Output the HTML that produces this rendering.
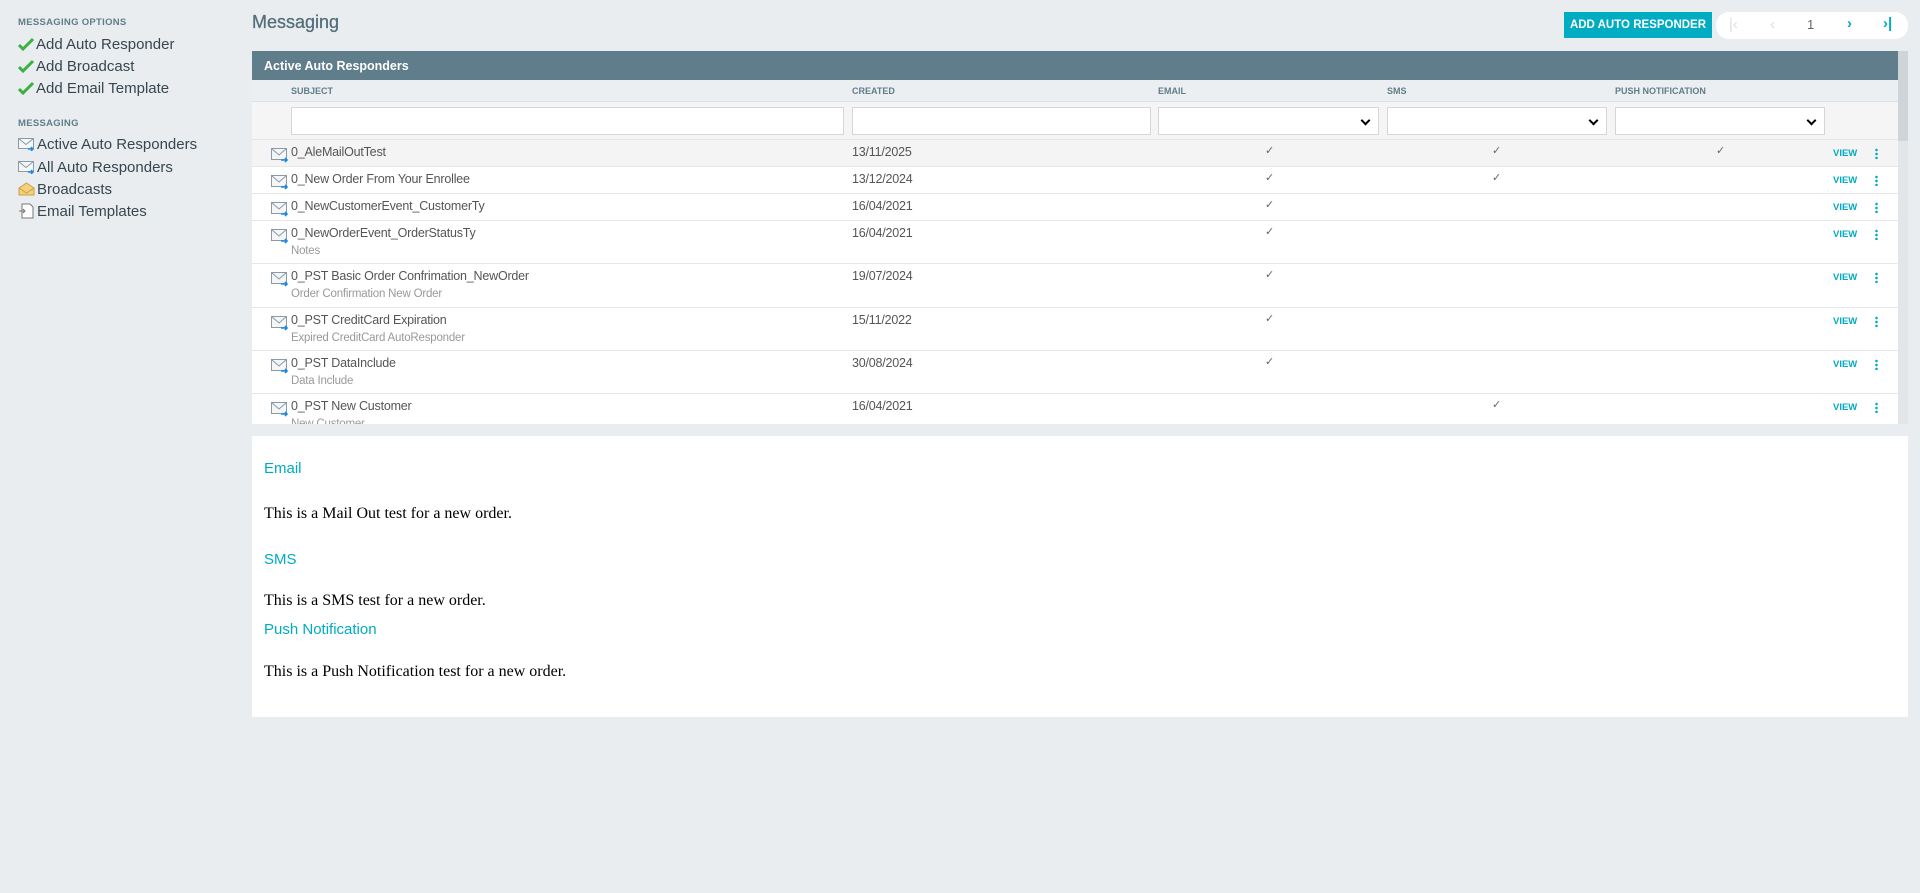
<!DOCTYPE html>
<html><head><meta charset="utf-8"><style>
*{box-sizing:border-box;margin:0;padding:0}
body{width:1920px;height:893px;background:#e9edf0;font-family:"Liberation Sans",sans-serif;position:relative;overflow:hidden;color:#555}
.a{position:absolute}
.sh{font-size:9.5px;font-weight:bold;color:#607d8b;letter-spacing:.3px}
.si{font-size:15px;color:#37474f;left:18px;display:flex;align-items:center;height:20px}
.si svg{margin-right:2px}
.col{font-size:9px;font-weight:bold;color:#607d8b;top:86px}
.inp{background:#fff;border:1px solid #d6d6d6;top:107px;height:28px}
.sel::after{content:"";position:absolute;right:9px;top:9px;width:5px;height:5px;border-right:2.5px solid #000;border-bottom:2.5px solid #000;transform:rotate(45deg)}
.row{position:absolute;left:0;width:1646px;border-bottom:1px solid #e6e6e6;background:#fff}
.t{position:absolute;font-size:12.5px;color:#555;letter-spacing:-.2px}
.sub{position:absolute;font-size:11.5px;color:#999;letter-spacing:-.2px}
.ck{position:absolute;font-size:11px;color:#666}
.v{position:absolute;left:1581px;font-size:9.5px;font-weight:bold;color:#00acc1}
.d{position:absolute;left:1623px;width:3px;height:11px;background:radial-gradient(circle,#00acc1 1.2px,transparent 1.4px) 0 0/3px 4px}
.ic{position:absolute;left:19px}
.h{color:#00acc1;font-size:15px;position:absolute;left:264px}
.p{font-family:"Liberation Serif",serif;font-size:16px;color:#000;position:absolute;left:264px}
</style></head><body>
<div class="a sh" style="left:18px;top:17px">MESSAGING OPTIONS</div>
<div class="a si" style="top:34px"><svg width="16" height="14" viewBox="0 0 16 14"><path d="M1 8l4 4L15 2" stroke="#3cb043" stroke-width="3" fill="none"/></svg>Add Auto Responder</div>
<div class="a si" style="top:56px"><svg width="16" height="14" viewBox="0 0 16 14"><path d="M1 8l4 4L15 2" stroke="#3cb043" stroke-width="3" fill="none"/></svg>Add Broadcast</div>
<div class="a si" style="top:78px"><svg width="16" height="14" viewBox="0 0 16 14"><path d="M1 8l4 4L15 2" stroke="#3cb043" stroke-width="3" fill="none"/></svg>Add Email Template</div>
<div class="a sh" style="left:18px;top:118px">MESSAGING</div>
<div class="a si" style="top:134px"><svg width="17" height="14" viewBox="0 0 17 14"><rect x=".5" y="1.5" width="15" height="10" fill="#f4f6f8" stroke="#8a9aa8"/><path d="M.5 1.5l7.5 6 7.5-6" stroke="#8a9aa8" fill="none"/><path d="M10 12h5m-2-2l2 2-2 2" stroke="#1e88e5" stroke-width="1.5" fill="none"/></svg>Active Auto Responders</div>
<div class="a si" style="top:157px"><svg width="17" height="14" viewBox="0 0 17 14"><rect x=".5" y="1.5" width="15" height="10" fill="#f4f6f8" stroke="#8a9aa8"/><path d="M.5 1.5l7.5 6 7.5-6" stroke="#8a9aa8" fill="none"/><path d="M10 12h5m-2-2l2 2-2 2" stroke="#1e88e5" stroke-width="1.5" fill="none"/></svg>All Auto Responders</div>
<div class="a si" style="top:179px"><svg width="17" height="14" viewBox="0 0 17 14"><path d="M1 6l7.5-5 7.5 5v7H1z" fill="#f5d07a" stroke="#c9a04a"/><path d="M1 6l7.5 5 7.5-5" stroke="#c9a04a" fill="none"/></svg>Broadcasts</div>
<div class="a si" style="top:201px"><svg width="17" height="16" viewBox="0 0 17 16"><path d="M4 1h8l3 3v11H4z" fill="#fff" stroke="#777"/><path d="M1 8h6m-2-2l2 2-2 2" stroke="#777" fill="none"/></svg>Email Templates</div>

<div class="a" style="left:252px;top:12px;font-size:18px;color:#546e7a;-webkit-text-stroke:.3px #546e7a">Messaging</div>
<div class="a" style="left:1564px;top:12px;width:148px;height:26px;background:#00acc1;color:#fff;font-size:11.5px;font-weight:bold;display:flex;align-items:center;justify-content:center">ADD AUTO RESPONDER</div>
<div class="a" style="left:1716px;top:12px;width:192px;height:27px;background:#fff;border-radius:13px;font-size:15px">
<span class="a" style="left:13px;top:4px;color:#ddd">|‹</span><span class="a" style="left:54px;top:4px;color:#ddd">‹</span><span class="a" style="left:91px;top:5px;color:#666;font-size:13px">1</span><span class="a" style="left:131px;top:3px;color:#00acc1;font-weight:bold">›</span><span class="a" style="left:167px;top:3px;color:#00acc1;font-weight:bold">›|</span></div>

<div class="a" style="left:252px;top:51px;width:1656px;height:373px;background:#fff;overflow:hidden">
<div class="a" style="left:1646px;top:0;width:10px;height:373px;background:#e2e6e9"></div>
<div class="a" style="left:1646px;top:0;width:10px;height:90px;background:#ced4d8"></div>
<div class="a" style="left:0;top:0;width:1646px;height:29px;background:#607d8b;color:#fff;font-size:12.5px;font-weight:bold;padding:8px 12px">Active Auto Responders</div>
<div class="a" style="left:0;top:29px;width:1646px;height:22px;background:#eceff1;border-bottom:1px solid #dde1e3"></div>
<div class="a" style="left:0;top:51px;width:1646px;height:38px;background:#f5f5f5;border-bottom:1px solid #e6e6e6"></div>
</div>
<div class="a col" style="left:291px">SUBJECT</div>
<div class="a col" style="left:852px">CREATED</div>
<div class="a col" style="left:1158px">EMAIL</div>
<div class="a col" style="left:1387px">SMS</div>
<div class="a col" style="left:1615px">PUSH NOTIFICATION</div>
<div class="a inp" style="left:291px;width:553px"></div>
<div class="a inp" style="left:852px;width:299px"></div>
<div class="a inp sel" style="left:1158px;width:221px"></div>
<div class="a inp sel" style="left:1387px;width:220px"></div>
<div class="a inp sel" style="left:1615px;width:210px"></div>

<div class="a" style="left:252px;top:140px;width:1646px;height:284px;overflow:hidden">
 <div class="row" style="top:0;height:27px;background:#f4f4f4"><svg class="ic" style="top:8px" width="18" height="15" viewBox="0 0 18 15"><rect x=".5" y=".5" width="15" height="11" fill="#f4f6f8" stroke="#8a9aa8"/><path d="M.5 .5l7.5 6.5 7.5-6.5" stroke="#8a9aa8" fill="none"/><path d="M10 12h6m-2-2l2 2-2 2" stroke="#1e88e5" stroke-width="1.6" fill="none"/></svg><span class="t" style="left:39px;top:5px">0_AleMailOutTest</span><span class="t" style="left:600px;top:5px">13/11/2025</span><span class="ck" style="left:1013px;top:4px">✓</span><span class="ck" style="left:1240px;top:4px">✓</span><span class="ck" style="left:1464px;top:4px">✓</span><span class="v" style="top:8px">VIEW</span><span class="d" style="top:8px"></span></div>
 <div class="row" style="top:27px;height:27px"><svg class="ic" style="top:8px" width="18" height="15" viewBox="0 0 18 15"><rect x=".5" y=".5" width="15" height="11" fill="#f4f6f8" stroke="#8a9aa8"/><path d="M.5 .5l7.5 6.5 7.5-6.5" stroke="#8a9aa8" fill="none"/><path d="M10 12h6m-2-2l2 2-2 2" stroke="#1e88e5" stroke-width="1.6" fill="none"/></svg><span class="t" style="left:39px;top:5px">0_New Order From Your Enrollee</span><span class="t" style="left:600px;top:5px">13/12/2024</span><span class="ck" style="left:1013px;top:4px">✓</span><span class="ck" style="left:1240px;top:4px">✓</span><span class="v" style="top:8px">VIEW</span><span class="d" style="top:8px"></span></div>
 <div class="row" style="top:54px;height:27px"><svg class="ic" style="top:8px" width="18" height="15" viewBox="0 0 18 15"><rect x=".5" y=".5" width="15" height="11" fill="#f4f6f8" stroke="#8a9aa8"/><path d="M.5 .5l7.5 6.5 7.5-6.5" stroke="#8a9aa8" fill="none"/><path d="M10 12h6m-2-2l2 2-2 2" stroke="#1e88e5" stroke-width="1.6" fill="none"/></svg><span class="t" style="left:39px;top:5px">0_NewCustomerEvent_CustomerTy</span><span class="t" style="left:600px;top:5px">16/04/2021</span><span class="ck" style="left:1013px;top:4px">✓</span><span class="v" style="top:8px">VIEW</span><span class="d" style="top:8px"></span></div>
 <div class="row" style="top:81px;height:43px"><svg class="ic" style="top:8px" width="18" height="15" viewBox="0 0 18 15"><rect x=".5" y=".5" width="15" height="11" fill="#f4f6f8" stroke="#8a9aa8"/><path d="M.5 .5l7.5 6.5 7.5-6.5" stroke="#8a9aa8" fill="none"/><path d="M10 12h6m-2-2l2 2-2 2" stroke="#1e88e5" stroke-width="1.6" fill="none"/></svg><span class="t" style="left:39px;top:5px">0_NewOrderEvent_OrderStatusTy</span><span class="sub" style="left:39px;top:24px">Notes</span><span class="t" style="left:600px;top:5px">16/04/2021</span><span class="ck" style="left:1013px;top:4px">✓</span><span class="v" style="top:8px">VIEW</span><span class="d" style="top:8px"></span></div>
 <div class="row" style="top:124px;height:44px"><svg class="ic" style="top:8px" width="18" height="15" viewBox="0 0 18 15"><rect x=".5" y=".5" width="15" height="11" fill="#f4f6f8" stroke="#8a9aa8"/><path d="M.5 .5l7.5 6.5 7.5-6.5" stroke="#8a9aa8" fill="none"/><path d="M10 12h6m-2-2l2 2-2 2" stroke="#1e88e5" stroke-width="1.6" fill="none"/></svg><span class="t" style="left:39px;top:5px">0_PST Basic Order Confrimation_NewOrder</span><span class="sub" style="left:39px;top:24px">Order Confirmation New Order</span><span class="t" style="left:600px;top:5px">19/07/2024</span><span class="ck" style="left:1013px;top:4px">✓</span><span class="v" style="top:8px">VIEW</span><span class="d" style="top:8px"></span></div>
 <div class="row" style="top:168px;height:43px"><svg class="ic" style="top:8px" width="18" height="15" viewBox="0 0 18 15"><rect x=".5" y=".5" width="15" height="11" fill="#f4f6f8" stroke="#8a9aa8"/><path d="M.5 .5l7.5 6.5 7.5-6.5" stroke="#8a9aa8" fill="none"/><path d="M10 12h6m-2-2l2 2-2 2" stroke="#1e88e5" stroke-width="1.6" fill="none"/></svg><span class="t" style="left:39px;top:5px">0_PST CreditCard Expiration</span><span class="sub" style="left:39px;top:24px">Expired CreditCard AutoResponder</span><span class="t" style="left:600px;top:5px">15/11/2022</span><span class="ck" style="left:1013px;top:4px">✓</span><span class="v" style="top:8px">VIEW</span><span class="d" style="top:8px"></span></div>
 <div class="row" style="top:211px;height:43px"><svg class="ic" style="top:8px" width="18" height="15" viewBox="0 0 18 15"><rect x=".5" y=".5" width="15" height="11" fill="#f4f6f8" stroke="#8a9aa8"/><path d="M.5 .5l7.5 6.5 7.5-6.5" stroke="#8a9aa8" fill="none"/><path d="M10 12h6m-2-2l2 2-2 2" stroke="#1e88e5" stroke-width="1.6" fill="none"/></svg><span class="t" style="left:39px;top:5px">0_PST DataInclude</span><span class="sub" style="left:39px;top:24px">Data Include</span><span class="t" style="left:600px;top:5px">30/08/2024</span><span class="ck" style="left:1013px;top:4px">✓</span><span class="v" style="top:8px">VIEW</span><span class="d" style="top:8px"></span></div>
 <div class="row" style="top:254px;height:43px"><svg class="ic" style="top:8px" width="18" height="15" viewBox="0 0 18 15"><rect x=".5" y=".5" width="15" height="11" fill="#f4f6f8" stroke="#8a9aa8"/><path d="M.5 .5l7.5 6.5 7.5-6.5" stroke="#8a9aa8" fill="none"/><path d="M10 12h6m-2-2l2 2-2 2" stroke="#1e88e5" stroke-width="1.6" fill="none"/></svg><span class="t" style="left:39px;top:5px">0_PST New Customer</span><span class="sub" style="left:39px;top:24px">New Customer</span><span class="t" style="left:600px;top:5px">16/04/2021</span><span class="ck" style="left:1240px;top:4px">✓</span><span class="v" style="top:8px">VIEW</span><span class="d" style="top:8px"></span></div>
</div>

<div class="a" style="left:252px;top:436px;width:1656px;height:281px;background:#fff"></div>
<div class="h" style="top:460px">Email</div>
<div class="p" style="top:505px">This is a Mail Out test for a new order.</div>
<div class="h" style="top:551px">SMS</div>
<div class="p" style="top:592px">This is a SMS test for a new order.</div>
<div class="h" style="top:621px">Push Notification</div>
<div class="p" style="top:663px">This is a Push Notification test for a new order.</div>
</body></html>
